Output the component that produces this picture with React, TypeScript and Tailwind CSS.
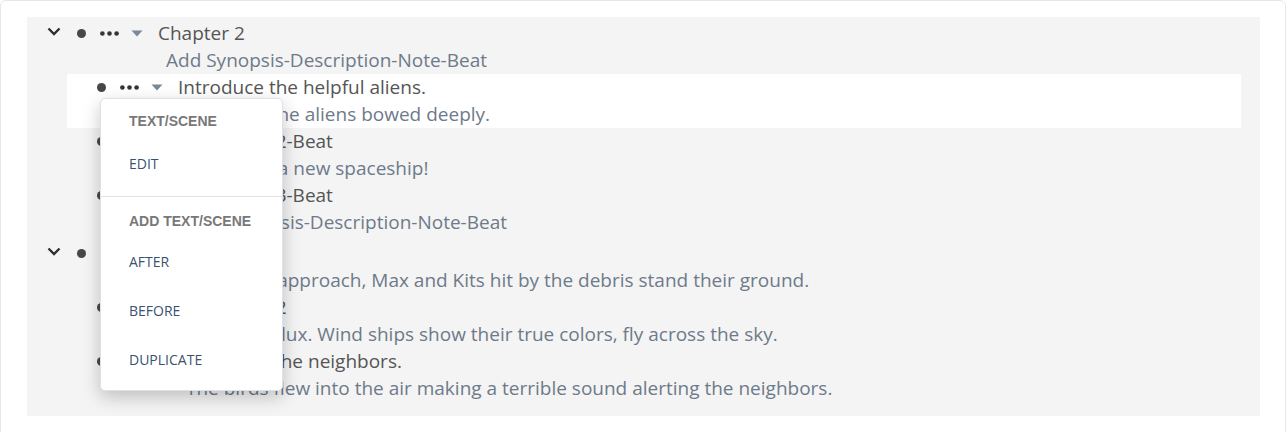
import React from "react";

type Scene = { title: string; sub: string; active?: boolean };
type Chapter = { title: string; sub: string; scenes: Scene[] };

const chapters: Chapter[] = [
  {
    title: "Chapter 2",
    sub: "Add Synopsis-Description-Note-Beat",
    scenes: [
      { title: "Introduce the helpful aliens.", sub: "Together the aliens bowed deeply.", active: true },
      { title: "Add Scene 2-Beat", sub: "They built a new spaceship!" },
      { title: "Add Scene 3-Beat", sub: "Add Synopsis-Description-Note-Beat" },
    ],
  },
  {
    title: "Chapter 3",
    sub: "As the ships approach, Max and Kits hit by the debris stand their ground.",
    scenes: [
      { title: "Add Scene 2", sub: "Time is in flux. Wind ships show their true colors, fly across the sky." },
      { title: "Birds alert the neighbors.", sub: "The birds flew into the air making a terrible sound alerting the neighbors." },
    ],
  },
];

function Chevron() {
  return (
    <svg width="14" height="9" viewBox="0 0 14 9" className="text-[#2f2f2f]">
      <path d="M1.5 1.5 L7 7 L12.5 1.5" fill="none" stroke="currentColor" strokeWidth="2.4" />
    </svg>
  );
}

function Controls() {
  return (
    <>
      <div className="w-[28px] flex justify-center">
        <span className="block w-[9px] h-[9px] rounded-full bg-[#474747]" />
      </div>
      <div className="w-[28px] flex justify-center">
        <svg width="19" height="5" viewBox="0 0 19 5">
          <circle cx="2.4" cy="2.5" r="2.3" fill="#353535" />
          <circle cx="9.5" cy="2.5" r="2.3" fill="#353535" />
          <circle cx="16.6" cy="2.5" r="2.3" fill="#353535" />
        </svg>
      </div>
      <div className="w-[27px] flex justify-center">
        <svg width="12" height="7" viewBox="0 0 12 7">
          <path d="M0.5 0.5 L11.5 0.5 L6 6.5 Z" fill="#7b8898" />
        </svg>
      </div>
    </>
  );
}

function Menu() {
  return (
    <div className="absolute left-[33px] top-[24px] z-10 w-[183px] h-[293px] bg-white border border-[#e0e1e6] rounded-[5px] shadow-[0_6px_18px_rgba(0,0,0,0.22)] font-['Open_Sans',sans-serif]">
      <div className="h-[45px] flex items-center pl-[28px] font-['Liberation_Sans',Arial,sans-serif] font-bold text-[14px] text-[#787878]">
        TEXT/SCENE
      </div>
      <div className="h-[38px] flex items-center pl-[28px] text-[14px] text-[#3a5270]">EDIT</div>
      <div className="h-[14px]" />
      <div className="h-px bg-[#e2e2e8]" />
      <div className="h-[40px] pt-[8px] flex items-center pl-[28px] font-['Liberation_Sans',Arial,sans-serif] font-bold text-[14px] text-[#787878]">
        ADD TEXT/SCENE
      </div>
      {["AFTER", "BEFORE", "DUPLICATE"].map((m) => (
        <div key={m} className="h-[49px] flex items-center pl-[28px] text-[14px] text-[#3a5270]">
          {m}
        </div>
      ))}
    </div>
  );
}

function SceneRow({ scene }: { scene: Scene }) {
  return (
    <div className={`relative ${scene.active ? "bg-white" : ""}`}>
      <div className="h-[27px] flex items-center">
        <div className="w-[20px]" />
        <Controls />
        <span className="ml-[8px] text-[#555555]">{scene.title}</span>
      </div>
      <div className="h-[27px] flex items-center pl-[119px] text-[#6e7a8a]">{scene.sub}</div>
      {scene.active && <Menu />}
    </div>
  );
}

function ChapterBlock({ chapter }: { chapter: Chapter }) {
  return (
    <div className="pb-[4px]">
      <div className="h-[27px] flex items-center">
        <div className="w-[20px] flex items-center -mt-[4px]">
          <Chevron />
        </div>
        <Controls />
        <span className="ml-[8px] text-[#555555]">{chapter.title}</span>
      </div>
      <div className="h-[27px] flex items-center pl-[119px] text-[#6e7a8a]">{chapter.sub}</div>
      <div className="ml-[20px]">
        {chapter.scenes.map((s) => (
          <SceneRow key={s.title} scene={s} />
        ))}
      </div>
    </div>
  );
}

export default function App() {
  return (
    <div className="w-[1286px] bg-white border border-[#e6e6e6] rounded-[6px] pt-[16px] pl-[26px] pr-[25px] pb-[24px] font-['Open_Sans',sans-serif] text-[19px] leading-[27px] whitespace-nowrap">
      <div className="bg-[#f4f4f4] pt-[3px] pb-[10px] pl-[20px] pr-[19px]">
        {chapters.map((c) => (
          <ChapterBlock key={c.title} chapter={c} />
        ))}
      </div>
    </div>
  );
}
